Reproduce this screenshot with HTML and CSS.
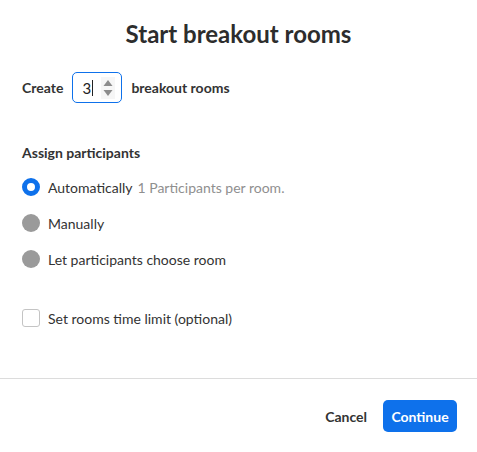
FILE: index.html
```html
<!DOCTYPE html>
<html>
<head>
<meta charset="utf-8">
<link rel="stylesheet" href="styles.css">
</head>
<body>
<div class="dialog">
  <div class="body">
    <h1 class="title">Start breakout rooms</h1>
    <div class="create-row">
      <span class="bold-label">Create</span>
      <div class="number-input">
        <span class="num">3</span><span class="caret"></span>
        <span class="spinner">
          <svg width="12" height="20" viewBox="0 0 12 20"><path d="M6 2 L10.5 8 L1.5 8 Z" fill="#8c8c8c"/><path d="M6 18 L10.5 12 L1.5 12 Z" fill="#8c8c8c"/></svg>
        </span>
      </div>
      <span class="bold-label">breakout rooms</span>
    </div>
    <div class="section-title">Assign participants</div>
    <div class="options">
      <div class="option"><span class="radio checked"></span><span class="opt-text">Automatically</span><span class="hint">1 Participants per room.</span></div>
      <div class="option"><span class="radio"></span><span class="opt-text">Manually</span></div>
      <div class="option"><span class="radio"></span><span class="opt-text">Let participants choose room</span></div>
    </div>
    <div class="check-row"><span class="checkbox"></span><span class="opt-text">Set rooms time limit (optional)</span></div>
  </div>
  <div class="footer">
    <button class="btn-cancel">Cancel</button>
    <button class="btn-continue">Continue</button>
  </div>
</div>
</body>
</html>
```
FILE: styles.css
```css
html, body {
  margin: 0;
  padding: 0;
  background: #ffffff;
}
body {
  font-family: Lato, "Noto Sans", sans-serif;
  color: #232333;
  width: 477px;
  height: 452px;
  overflow: hidden;
}
.dialog {
  display: flex;
  flex-direction: column;
}
.body {
  padding: 0 22px;
  height: 378px;
  border-bottom: 1px solid #dcdcdc;
}
.title {
  margin: 0;
  padding-top: 19px;
  text-align: center;
  font-size: 24px;
  font-weight: 700;
  line-height: 30px;
  color: #2d2d2d;
}
.create-row {
  display: flex;
  align-items: center;
  margin-top: 23px;
  height: 31px;
}
.bold-label {
  font-size: 14px;
  font-weight: 700;
  color: #333;
}
.number-input {
  box-sizing: border-box;
  width: 50px;
  height: 31px;
  margin: 0 9px 0 9px;
  border: 1px solid #0e71eb;
  border-radius: 5px;
  display: flex;
  align-items: center;
  padding-left: 9px;
}
.num {
  font-size: 15px;
  color: #222;
  line-height: 18px;
}
.caret {
  width: 1px;
  height: 16px;
  background: #222;
  margin-left: 1px;
}
.spinner {
  margin-left: 8px;
  width: 14px;
  height: 22px;
  background: #f6f6f6;
  display: flex;
  align-items: center;
  justify-content: center;
}
.spinner svg { display: block; }
.section-title {
  margin-top: 41px;
  font-size: 14px;
  font-weight: 700;
  color: #333;
  line-height: 17px;
}
.options {
  margin-top: 17px;
  display: flex;
  flex-direction: column;
  gap: 18px;
}
.option, .check-row {
  display: flex;
  align-items: center;
  height: 18px;
}
.radio {
  box-sizing: border-box;
  width: 18px;
  height: 18px;
  border-radius: 50%;
  background: #9a9a9a;
  margin-right: 8px;
  flex: none;
}
.radio.checked {
  background: #ffffff;
  border: 5px solid #0e71eb;
}
.opt-text {
  font-size: 14px;
  color: #333;
}
.hint {
  font-size: 14px;
  color: #8f8f8f;
  margin-left: 5px;
}
.check-row {
  margin-top: 41px;
}
.checkbox {
  box-sizing: border-box;
  width: 18px;
  height: 18px;
  border: 1px solid #c4c4c4;
  border-radius: 3px;
  margin-right: 8px;
  flex: none;
}
.footer {
  display: flex;
  justify-content: flex-end;
  align-items: center;
  padding: 21px 20px 0 0;
  gap: 16px;
}
.btn-cancel {
  font-family: Lato, "Noto Sans", sans-serif;
  background: none;
  border: none;
  padding: 0;
  font-size: 14px;
  font-weight: 700;
  color: #333;
}
.btn-continue {
  font-family: Lato, "Noto Sans", sans-serif;
  background: #0e71eb;
  border: none;
  border-radius: 5px;
  color: #fff;
  font-size: 14px;
  font-weight: 700;
  width: 74px;
  height: 32px;
  padding: 0;
}
```
